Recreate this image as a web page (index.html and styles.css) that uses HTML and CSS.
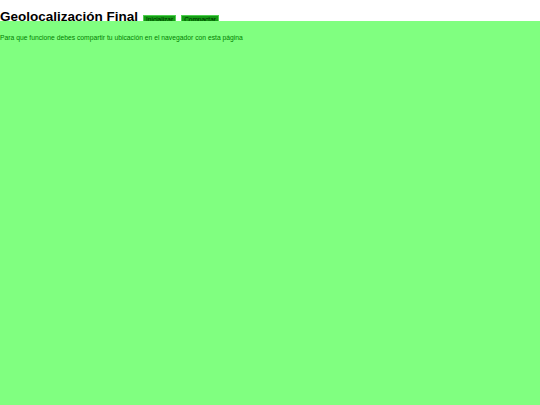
FILE: index.html
```html
<!DOCTYPE html>
<html lang="es">
<head>
<meta charset="utf-8">
<title>Geolocalización Final</title>
<link rel="stylesheet" href="styles.css">
</head>
<body>
<header class="top">
  <h1 class="title">Geolocalización Final</h1>
  <button class="btn">Inicializar</button>
  <button class="btn">Compactar</button>
</header>
<main class="content">
  <p class="note">Para que funcione debes compartir tu ubicación en el navegador con esta página</p>
</main>
</body>
</html>
```
FILE: styles.css
```css
html, body {
  margin: 0;
  padding: 0;
  height: 100%;
}
body {
  font-family: "Liberation Sans", Arial, sans-serif;
  background: #ffffff;
  display: flex;
  flex-direction: column;
}
.top {
  height: 21px;
  display: flex;
  align-items: flex-end;
  gap: 5px;
}
.title {
  margin: 0 0 -4px 0;
  font-size: 13.5px;
  font-weight: bold;
  color: #000;
  line-height: 16px;
}
.btn {
  margin: 0 0 -3px 0;
  padding: 0 2px;
  height: 9px;
  font-family: "Liberation Sans", Arial, sans-serif;
  font-size: 6.5px;
  line-height: 7px;
  color: #002a00;
  background: #159d15;
  border: 1px solid #50d050;
  border-radius: 0;
}
.content {
  flex: 1;
  background: #80ff80;
  padding: 13px 0 0 0;
}
.note {
  margin: 0;
  font-size: 6.75px;
  color: #008000;
}
```
